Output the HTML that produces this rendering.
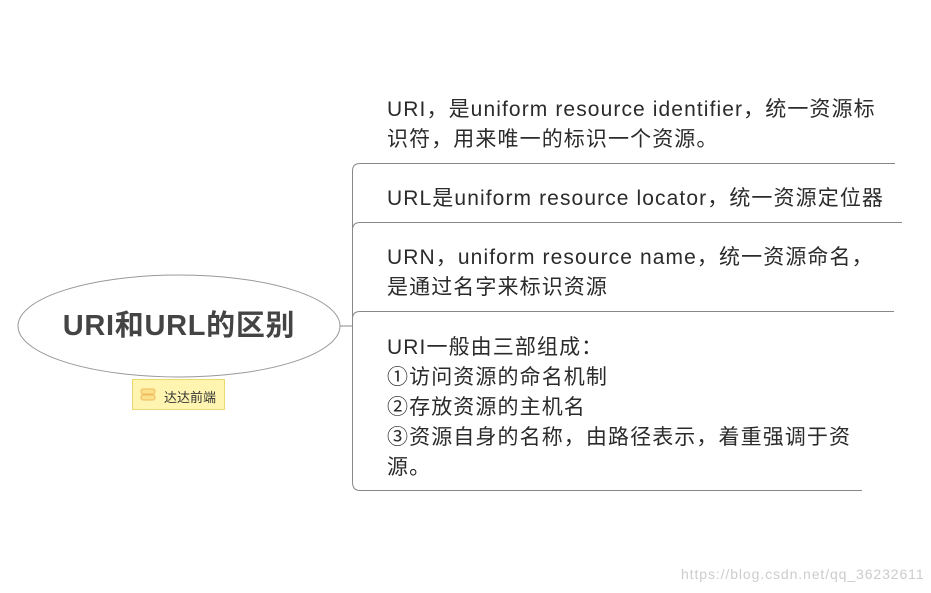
<!DOCTYPE html>
<html><head><meta charset="utf-8"><style>
body{margin:0;width:931px;height:593px;background:#fff;position:relative;overflow:hidden;font-family:"Liberation Sans","Noto Sans CJK SC",sans-serif;}
.t{position:absolute;left:387px;font-size:21px;line-height:30px;color:#2b2b2b;white-space:nowrap;letter-spacing:1.1px;}
</style></head><body>
<svg width="931" height="593" style="position:absolute;left:0;top:0">
<ellipse cx="179" cy="326" rx="161" ry="51" fill="#fff" stroke="#999" stroke-width="1"/>
<g fill="none" stroke="#888" stroke-width="1">
<path d="M340 326H352"/>
<path d="M895 163.5H360Q352.5 163.5 352.5 171V482Q352.5 490.5 360 490.5H862"/>
<path d="M902 222.5H360Q352.5 222.5 352.5 230"/>
<path d="M894 311.5H360Q352.5 311.5 352.5 319"/>
</g>
<rect x="132.5" y="379.5" width="92" height="30" fill="#fff5b0" stroke="#f0d870"/>
<rect x="141" y="389" width="14" height="5" rx="2" fill="#fbe08a" stroke="#f0b860"/>
<rect x="141" y="395" width="14" height="5" rx="2" fill="#fbe08a" stroke="#f0b860"/>
</svg>
<div style="position:absolute;left:18px;top:306px;width:322px;text-align:center;font-size:29px;font-weight:bold;color:#444;line-height:40px;letter-spacing:0.7px">URI和URL的区别</div>
<div style="position:absolute;left:164px;top:387px;font-size:13px;color:#333">达达前端</div>
<div class="t" style="top:95px">URI，是uniform resource identifier，统一资源标<br>识符，用来唯一的标识一个资源。</div>
<div class="t" style="top:184px">URL是uniform resource locator，统一资源定位器</div>
<div class="t" style="top:243px">URN，uniform resource name，统一资源命名，<br>是通过名字来标识资源</div>
<div class="t" style="top:333px">URI一般由三部组成：<br>①访问资源的命名机制<br>②存放资源的主机名<br>③资源自身的名称，由路径表示，着重强调于资<br>源。</div>
<div style="position:absolute;left:681px;top:566px;font-size:14px;color:#ccc;letter-spacing:0.9px">https://blog.csdn.net/qq_36232611</div>
</body></html>
